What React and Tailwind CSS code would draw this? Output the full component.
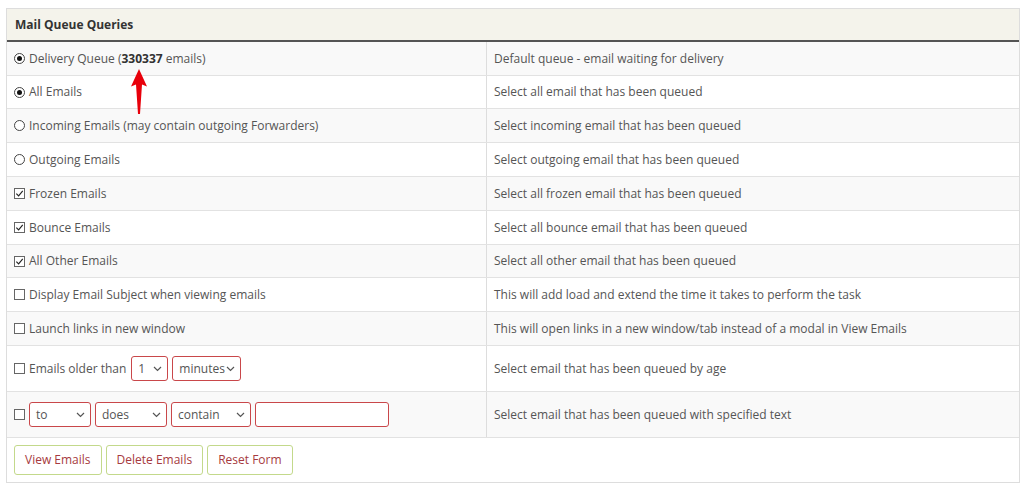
import React from "react";

const Radio = ({ checked }) => (
  <span className="inline-flex items-center justify-center w-[11px] h-[11px] rounded-full border border-[#444] bg-white shrink-0">
    {checked && <span className="w-[5px] h-[5px] rounded-full bg-[#111]" />}
  </span>
);

const Check = ({ checked }) => (
  <span className="inline-flex items-center justify-center w-[11px] h-[11px] border border-[#666] bg-white shrink-0">
    {checked && (
      <svg width="9" height="9" viewBox="0 0 10 10" fill="none">
        <path d="M1.5 5.2 L4 7.6 L8.6 2.2" stroke="#222" strokeWidth="1.3" />
      </svg>
    )}
  </span>
);

const Select = ({ value, width }) => (
  <div
    className="h-[25px] flex items-center justify-between border border-[#c9474a] rounded-[3px] bg-white pl-[6px] pr-[5px] text-[#555] shrink-0"
    style={{ width }}
  >
    <span>{value}</span>
    <svg width="9" height="6" viewBox="0 0 9 6" fill="none">
      <path d="M1 1 L4.5 4.5 L8 1" stroke="#555" strokeWidth="1.2" />
    </svg>
  </div>
);

const Button = ({ children }) => (
  <button className="h-[30px] px-[10px] border border-[#c3d98b] rounded-[3px] bg-white text-[#a63a40]">
    {children}
  </button>
);

const rows = [
  { left: <><Radio checked /> <span>Delivery Queue (<b className="text-[#333]">330337</b> emails)</span></>, right: "Default queue - email waiting for delivery", h: "h-[34px]" },
  { left: <><Radio checked /> <span>All Emails</span></>, right: "Select all email that has been queued", h: "h-[33px]" },
  { left: <><Radio /> <span>Incoming Emails (may contain outgoing Forwarders)</span></>, right: "Select incoming email that has been queued", h: "h-[34px]" },
  { left: <><Radio /> <span>Outgoing Emails</span></>, right: "Select outgoing email that has been queued", h: "h-[34px]" },
  { left: <><Check checked /> <span>Frozen Emails</span></>, right: "Select all frozen email that has been queued", h: "h-[34px]" },
  { left: <><Check checked /> <span>Bounce Emails</span></>, right: "Select all bounce email that has been queued", h: "h-[34px]" },
  { left: <><Check checked /> <span>All Other Emails</span></>, right: "Select all other email that has been queued", h: "h-[33px]" },
  { left: <><Check /> <span>Display Email Subject when viewing emails</span></>, right: "This will add load and extend the time it takes to perform the task", h: "h-[34px]" },
  { left: <><Check /> <span>Launch links in new window</span></>, right: "This will open links in a new window/tab instead of a modal in View Emails", h: "h-[34px]" },
  {
    left: (
      <>
        <Check /> <span className="mr-[1px]">Emails older than</span>
        <Select value="1" width={37} />
        <Select value="minutes" width={69} />
      </>
    ),
    right: "Select email that has been queued by age",
    h: "h-[46px]",
  },
  {
    left: (
      <>
        <Check />
        <Select value="to" width={62} />
        <Select value="does" width={72} />
        <Select value="contain" width={80} />
        <input className="h-[25px] w-[134px] border border-[#c9474a] rounded-[3px] bg-white outline-none" />
      </>
    ),
    right: "Select email that has been queued with specified text",
    h: "h-[46px]",
  },
];

export default function App() {
  return (
    <div className="bg-white pt-[8px] pl-[6px] w-[1024px] h-[490px] text-[12px] text-[#555]" style={{ fontFamily: '"Open Sans", sans-serif' }}>
      <div className="relative w-[1014px] border border-[#ddd]">
        <div className="h-[33px] flex items-center px-[8px] bg-[#f4f3eb] border-b-2 border-[#555] font-bold text-[#333]">
          Mail Queue Queries
        </div>
        {rows.map((r, i) => (
          <div key={i} className={`flex border-b border-[#e2e2e2] ${r.h} ${i % 2 === 0 ? "bg-[#f9f9f9]" : "bg-white"}`}>
            <div className="w-[480px] flex items-center gap-[4px] pl-[7px] border-r border-[#ddd]">{r.left}</div>
            <div className="flex-1 flex items-center pl-[7px]">{r.right}</div>
          </div>
        ))}
        <div className="h-[44px] flex items-start gap-[4px] pt-[7px] pl-[7px] bg-white">
          <Button>View Emails</Button>
          <Button>Delete Emails</Button>
          <Button>Reset Form</Button>
        </div>
        <svg className="absolute left-[123px] top-[60px]" width="18" height="46" viewBox="0 0 18 46">
          <path d="M9 0 L17 17.5 L12 15.5 L10 45 L8 45 L6 15.5 L1 17.5 Z" fill="#e8000b" />
        </svg>
      </div>
    </div>
  );
}
